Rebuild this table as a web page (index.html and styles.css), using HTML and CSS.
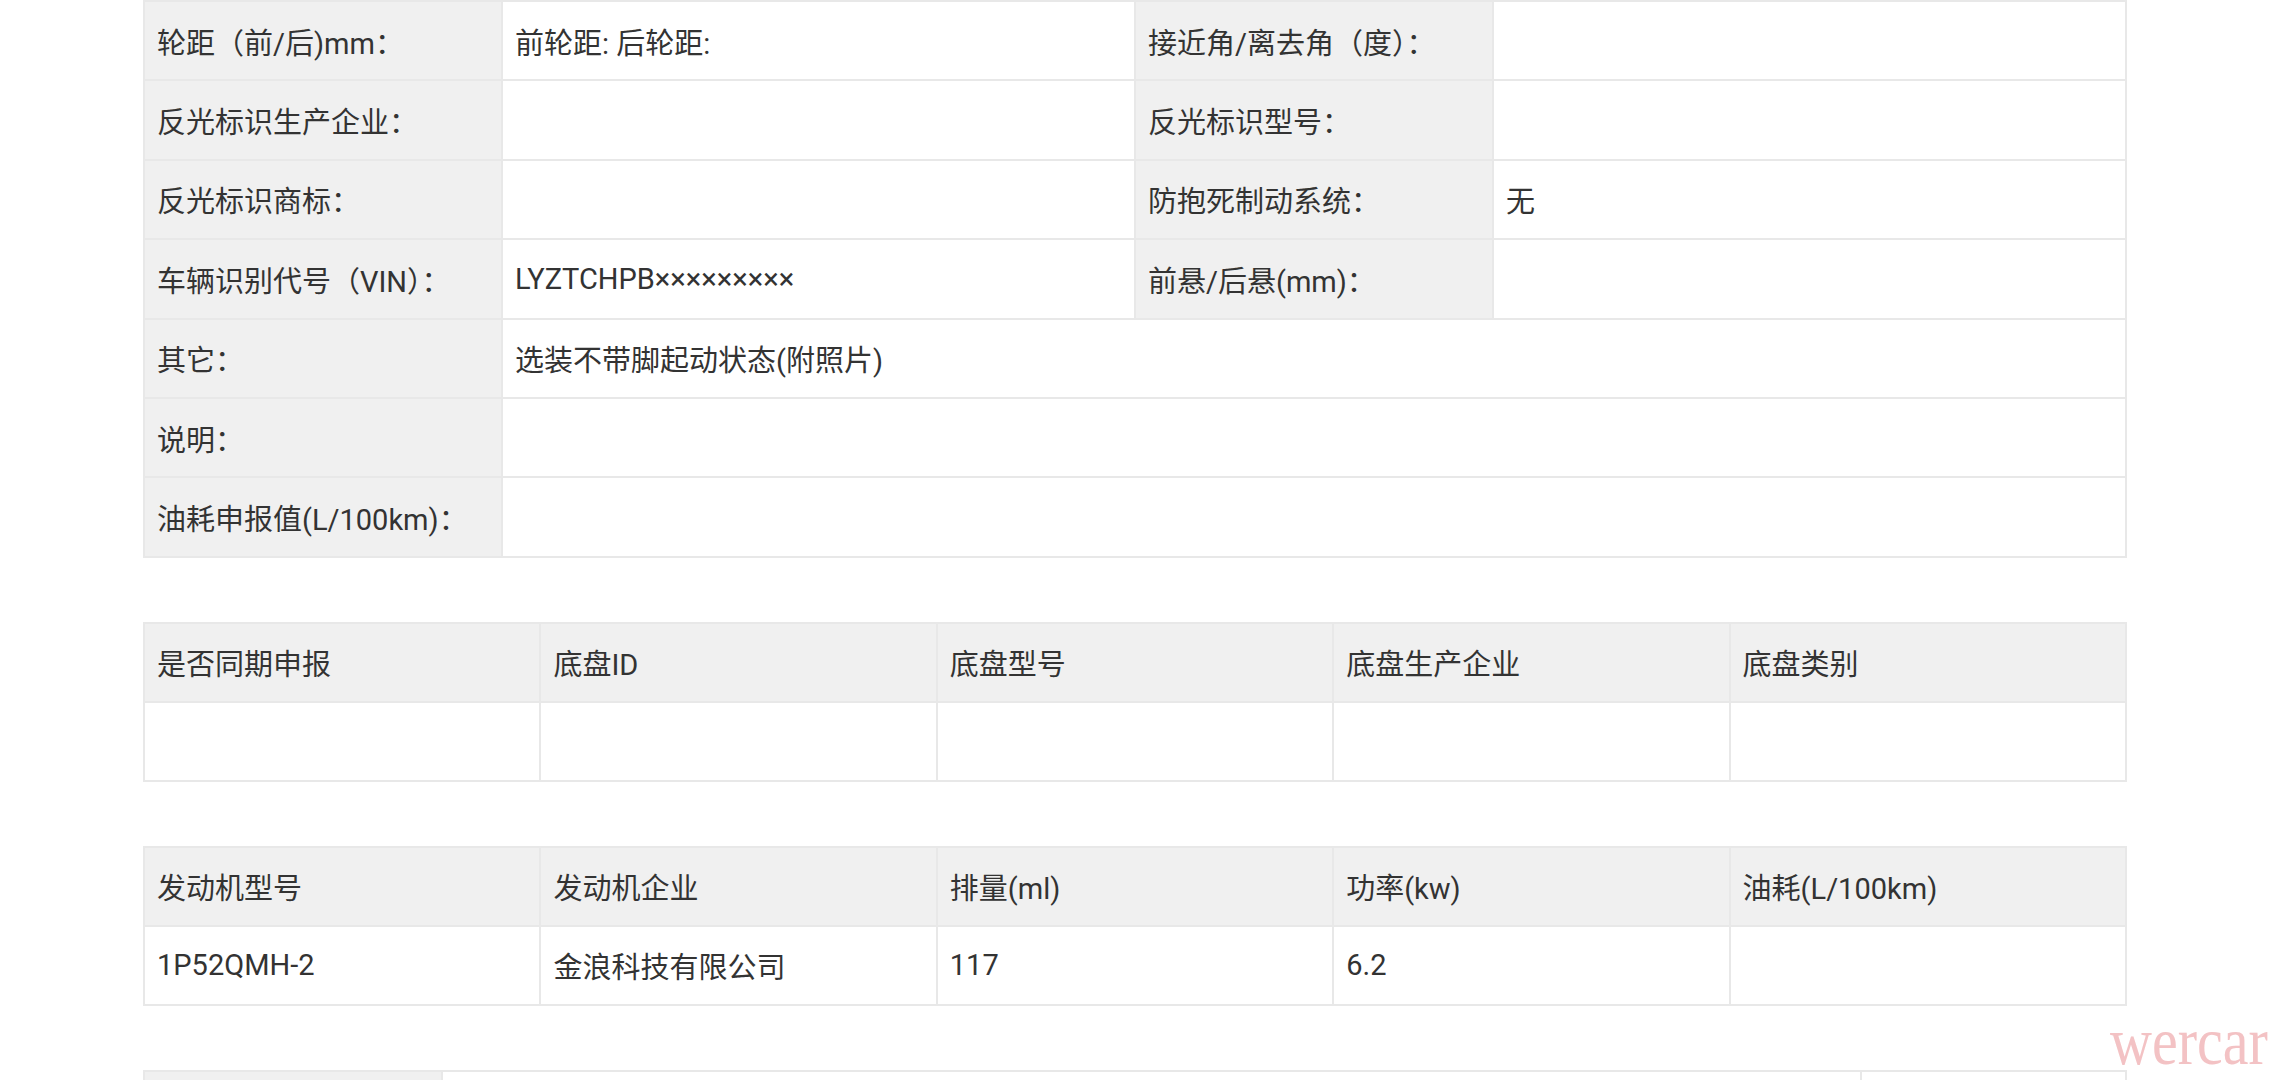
FILE: index.html
```html
<!DOCTYPE html>
<html lang="zh-CN">
<head>
<meta charset="utf-8">
<title>车辆参数</title>
<link rel="stylesheet" href="styles.css">
</head>
<body>
<main class="page">
  <section class="grid grid-info">
    <div class="cell label">轮距（前/后)mm：</div>
    <div class="cell value">前轮距: 后轮距:</div>
    <div class="cell label">接近角/离去角（度）：</div>
    <div class="cell value"></div>

    <div class="cell label">反光标识生产企业：</div>
    <div class="cell value"></div>
    <div class="cell label">反光标识型号：</div>
    <div class="cell value"></div>

    <div class="cell label">反光标识商标：</div>
    <div class="cell value"></div>
    <div class="cell label">防抱死制动系统：</div>
    <div class="cell value">无</div>

    <div class="cell label">车辆识别代号（VIN）：</div>
    <div class="cell value">LYZTCHPB×××××××××</div>
    <div class="cell label">前悬/后悬(mm)：</div>
    <div class="cell value"></div>

    <div class="cell label">其它：</div>
    <div class="cell value span3">选装不带脚起动状态(附照片)</div>

    <div class="cell label">说明：</div>
    <div class="cell value span3"></div>

    <div class="cell label">油耗申报值(L/100km)：</div>
    <div class="cell value span3"></div>
  </section>

  <section class="grid grid-five">
    <div class="cell label">是否同期申报</div>
    <div class="cell label">底盘ID</div>
    <div class="cell label">底盘型号</div>
    <div class="cell label">底盘生产企业</div>
    <div class="cell label">底盘类别</div>
    <div class="cell value"></div>
    <div class="cell value"></div>
    <div class="cell value"></div>
    <div class="cell value"></div>
    <div class="cell value"></div>
  </section>

  <section class="grid grid-five">
    <div class="cell label">发动机型号</div>
    <div class="cell label">发动机企业</div>
    <div class="cell label">排量(ml)</div>
    <div class="cell label">功率(kw)</div>
    <div class="cell label">油耗(L/100km)</div>
    <div class="cell value">1P52QMH-2</div>
    <div class="cell value">金浪科技有限公司</div>
    <div class="cell value">117</div>
    <div class="cell value">6.2</div>
    <div class="cell value"></div>
  </section>

  <section class="grid grid-last">
    <div class="cell label"></div>
    <div class="cell value"></div>
    <div class="cell value"></div>
  </section>
</main>
<div class="watermark">wercar</div>
</body>
</html>
```

FILE: styles.css
```css
html, body {
  margin: 0;
  padding: 0;
  background: #ffffff;
  height: 1080px;
  overflow: hidden;
}

body {
  position: relative;
  font-family: Roboto, "Noto Sans CJK SC", sans-serif;
  font-size: 29px;
  color: #333333;
}

.page {
  padding-left: 143px;
  width: 1984px;
  display: flex;
  flex-direction: column;
  gap: 64px;
}

.grid {
  display: grid;
  gap: 2px;
  padding: 2px;
  background: #e8e8e8;
}

.grid-info {
  grid-template-columns: 356px 631px 356px 631px;
  grid-auto-rows: 77.4px;
}

.grid-five {
  grid-template-columns: repeat(5, 1fr);
  grid-auto-rows: 77px;
}

.grid-last {
  grid-template-columns: 296px 1fr 263px;
  grid-auto-rows: 77px;
}

.cell {
  display: flex;
  align-items: center;
  padding: 0 12px;
  white-space: nowrap;
  overflow: hidden;
}

.label {
  background: #f0f0f0;
}

.value {
  background: #ffffff;
}

.span3 {
  grid-column: span 3;
}

.watermark {
  position: absolute;
  left: 2110px;
  top: 1016px;
  font-family: "Liberation Serif", serif;
  font-size: 58px;
  line-height: 58px;
  color: #f3c2c4;
  transform: scaleY(1.15);
  transform-origin: 0 48.6px;
}
```
